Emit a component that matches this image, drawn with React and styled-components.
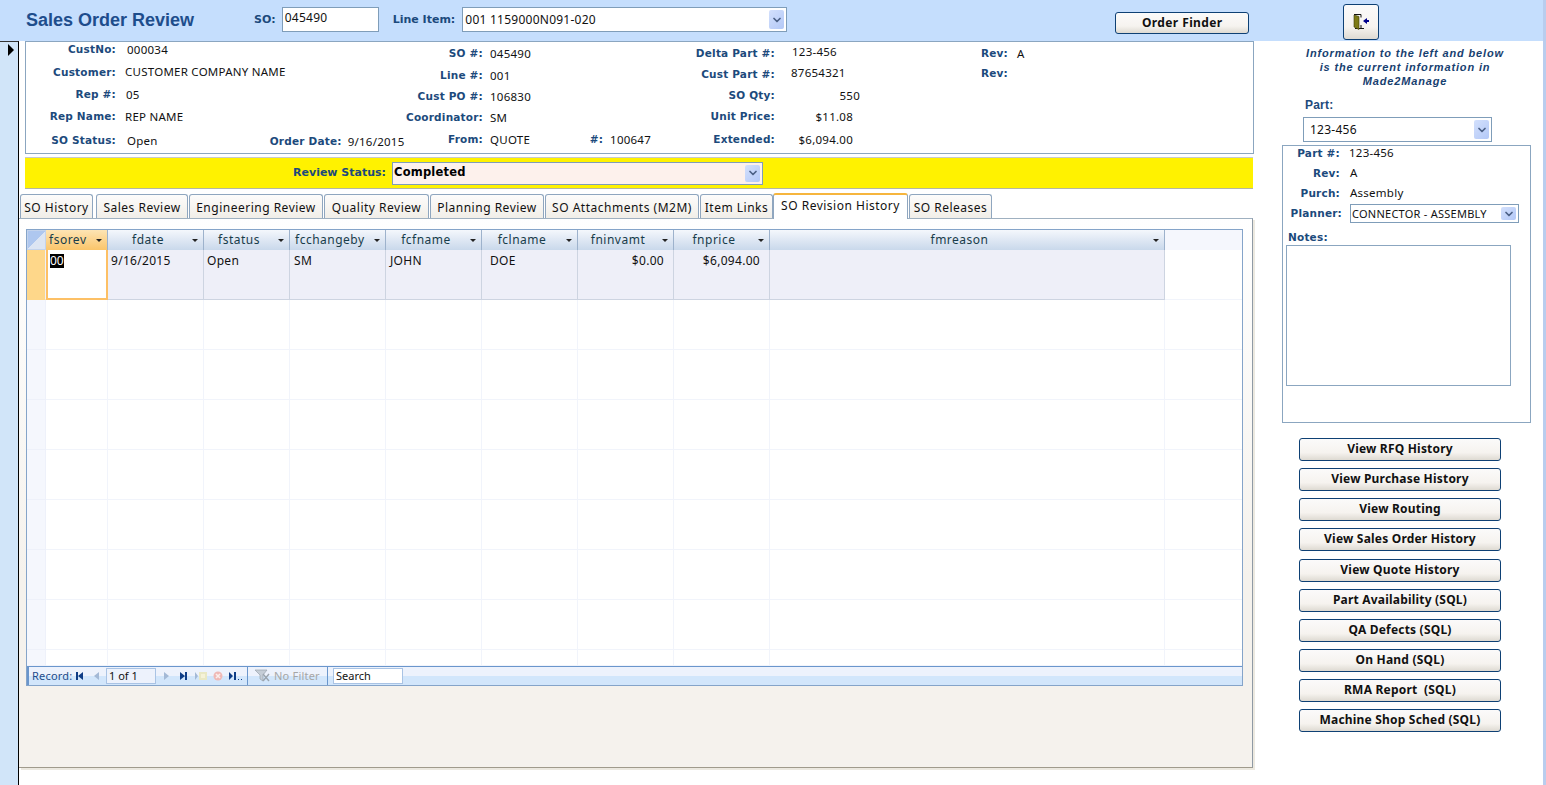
import React from 'react'
import styled, { createGlobalStyle, css } from 'styled-components'
import { ChevronDown } from 'lucide-react'

const Global = createGlobalStyle`
  html, body {
    margin: 0;
    padding: 0;
    background: #fff;
    overflow: hidden;
  }
  * { box-sizing: border-box; }
`

const labelFont = css`
  font-family: 'DejaVu Sans', Verdana, sans-serif;
  font-weight: bold;
  font-size: 10.5px;
  letter-spacing: 0.2px;
  color: #1c4a7c;
  white-space: nowrap;
`
const valueFont = css`
  font-family: 'Noto Sans', Tahoma, sans-serif;
  font-size: 11.5px;
  letter-spacing: 0.25px;
  color: #111;
  white-space: nowrap;
`

const Shell = styled.div`
  display: flex;
  width: 1546px;
  height: 785px;
  overflow: hidden;
`
const Page = styled.div`
  width: 1543px;
  display: flex;
  flex-direction: column;
`
const EdgeStrip = styled.div`
  width: 3px;
  background: #b9cdee;
`

// *---- top bar ----*
const Header = styled.header`
  height: 41px;
  flex: none;
  background: #c5defd;
  display: flex;
  align-items: flex-start;
`
const Title = styled.h1`
  margin: 9px 0 0 26px;
  width: 228px;
  font: bold 18px/22px 'Liberation Sans', Arial, sans-serif;
  color: #1e4d8c;
`
const HeadLabel = styled.span`
  ${labelFont}
  font-size: 11px;
  letter-spacing: 0;
  margin: 13px ${p => p.$gap}px 0 0;
`
const TextBox = styled.div`
  ${valueFont}
  font-size: 12px;
  margin: 7px 14px 0 0;
  width: ${p => p.$w}px;
  height: 25px;
  border: 1px solid #7f9db9;
  background: #fff;
  padding: 0 2px;
  line-height: 20px;
`
const ComboBox = styled.div`
  ${valueFont}
  display: flex;
  align-items: center;
  justify-content: space-between;
  width: ${p => p.$w}px;
  height: ${p => p.$h}px;
  border: 1px solid #7f9db9;
  background: ${p => p.$bg || '#fff'};
  padding: 2px 2px 2px 1px;
`
const ComboText = styled.span`
  padding-left: ${p => p.$pad || 0}px;
  font-size: ${p => p.$size || 12}px;
  ${p => p.$bold && css`
    font-family: 'DejaVu Sans', Verdana, sans-serif;
    font-weight: bold;
    font-size: 11.5px;
    color: #000;
    letter-spacing: 0.2px;
    padding-bottom: 2px;
  `}
`
const ArrowBtn = styled.span`
  flex: none;
  width: 15px;
  height: 100%;
  border-radius: 2px;
  background: linear-gradient(135deg, #d3e0fc, #b3c8f7);
  display: flex;
  align-items: center;
  justify-content: center;
  color: #4c6186;
`
const HeadCombo = styled(ComboBox)`
  margin-top: 7px;
`
const pushButton = css`
  border: 1px solid #0e4074;
  border-radius: 3px;
  background: linear-gradient(#fbfafa 0%, #f6f3ef 65%, #dedad2 100%);
  font-family: 'Noto Sans', Tahoma, sans-serif;
  font-weight: bold;
  font-size: 12px;
  color: #111;
  padding: 0 0 2px;
  white-space: pre;
`
const FinderBtn = styled.button`
  ${pushButton}
  width: 134px;
  height: 22px;
  margin: 12px 0 0 328px;
  letter-spacing: 0.4px;
`
const ExitBtn = styled.button`
  ${pushButton}
  width: 36px;
  height: 36px;
  margin: 4px 0 0 94px;
  padding: 0;
  display: flex;
  align-items: center;
  justify-content: center;
`

const Body = styled.div`
  flex: 1;
  display: flex;
  min-height: 0;
`
const RecordSelector = styled.div`
  width: 19px;
  flex: none;
  background: #d1e5f9;
  border-right: 1px solid #000;
  border-top: 1px solid #333;
  padding: 2px 0 0 8px;
`
const Pointer = styled.div`
  width: 0;
  height: 0;
  border-left: 6px solid #000;
  border-top: 6px solid transparent;
  border-bottom: 6px solid transparent;
`
const Main = styled.main`
  width: 1235px;
  flex: none;
  display: flex;
  flex-direction: column;
`

// *---- order detail block ----*
const Detail = styled.section`
  margin-left: 6px;
  height: 113px;
  border: 1px solid #8ba6c0;
  display: flex;
`
const Col = styled.div`
  width: ${p => p.$w}px;
  flex: none;
`
const Row = styled.div`
  display: flex;
  align-items: flex-start;
  height: 14px;
  margin-top: ${p => p.$mt || 0}px;
`
const Label = styled.span`
  ${labelFont}
  flex: none;
  width: ${p => p.$w}px;
  text-align: right;
  line-height: 14px;
  margin-top: ${p => p.$dy || 0}px;
`
const Value = styled.span`
  ${valueFont}
  flex: none;
  line-height: 14px;
  margin-left: ${p => p.$ml || 0}px;
  margin-top: ${p => (p.$dy === undefined ? 1 : p.$dy)}px;
  ${p => p.$w && css`
    width: ${p.$w}px;
    text-align: right;
  `}
`

const ReviewBar = styled.div`
  margin: 3px 0 0 6px;
  height: 32px;
  width: 1228px;
  background: #fff200;
  border-top: 1px solid #c6cacc;
  border-bottom: 1px solid #b5b7a0;
  display: flex;
  align-items: center;
`
const ReviewLabel = styled.span`
  ${labelFont}
  font-size: 11px;
  letter-spacing: 0;
  width: 361px;
  margin-right: 6px;
  padding-bottom: 2px;
  text-align: right;
`

// *---- tabs ----*
const TabRow = styled.div`
  margin: 4px 0 0 1px;
  height: 25px;
  flex: none;
  display: flex;
  align-items: flex-end;
  gap: 1px;
  position: relative;
  z-index: 1;
`
const Tab = styled.div`
  ${valueFont}
  font-size: 12px;
  letter-spacing: 0.5px;
  width: ${p => p.$w}px;
  height: 24px;
  line-height: 25px;
  text-align: center;
  border: 1px solid #8fa6bf;
  border-bottom: none;
  border-radius: 3px 3px 0 0;
  background: linear-gradient(#fdfcfb, #f1eee8);
  &:nth-child(2) { margin-left: 2px; }
  ${p => p.$active && css`
    height: 26px;
    line-height: 22px;
    margin: 0 0 -1px -1px;
    background: #fff;
    border-top: 2px solid #f6b53d;
    border-color: #f6b53d #8fa6bf #fff #8fa6bf;
  `}
`
const TabPage = styled.div`
  width: 1234px;
  height: 550px;
  flex: none;
  border-top: 1px solid #9fb0c0;
  border-right: 1px solid #8f9aa5;
  border-bottom: 1px solid #a09b8c;
  box-shadow: 2px 2px 0 #ece9e0;
  background: linear-gradient(#fff 0%, #f5f2ed 65%);
  padding: 10px 0 0 7px;
`

// *---- datasheet ----*
const gridCols = '19px 62px 96px 86px 96px 96px 96px 96px 96px 395px 77px'
const Sheet = styled.div`
  width: 1217px;
  height: 457px;
  border: 1px solid #85a4c9;
  background: #fff;
  display: flex;
  flex-direction: column;
`
const SheetRow = styled.div`
  display: grid;
  grid-template-columns: ${gridCols};
  flex: none;
  height: ${p => p.$h}px;
`
const Corner = styled.div`
  background: linear-gradient(135deg, #aec7ef 50%, #dce5f3 50%);
  border: 1px solid #c3d3ec;
`
const HeadCell = styled.div`
  font-family: 'Noto Sans', Tahoma, sans-serif;
  font-size: 12px;
  letter-spacing: 0.5px;
  color: #183c4a;
  display: flex;
  align-items: center;
  justify-content: ${p => (p.$pl ? 'flex-start' : 'center')};
  padding: 0 ${p => (p.$pl ? 10 : 18)}px 2px ${p => p.$pl || 3}px;
  position: relative;
  border-right: 1px solid #9db2cc;
  background: ${p => (p.$on
    ? 'linear-gradient(#fde4b4, #fbc56a)'
    : 'linear-gradient(#f4f7fc, #c9d8eb)')};
`
const SortMark = styled.i`
  position: absolute;
  right: 5px;
  top: 9px;
  width: 0;
  height: 0;
  border-left: 3px solid transparent;
  border-right: 3px solid transparent;
  border-top: 3px solid #222;
`
const HeadRest = styled.div`
  background: #f5f7fd;
`
const SheetBody = styled.div`
  flex: 1;
  min-height: 0;
  overflow: hidden;
`
const RowHead = styled.div`
  background: ${p => (p.$on ? '#fed78a' : '#f5f7fd')};
  border-right: 1px solid #eef1fa;
  border-bottom: 1px solid ${p => (p.$on ? '#fed78a' : '#eef1fa')};
`
const Cell = styled.div`
  ${valueFont}
  font-size: 12px;
  letter-spacing: 0.3px;
  padding: 3px ${p => (p.$right ? 9 : 4)}px 0 ${p => p.$pl || 3}px;
  line-height: 16px;
  text-align: ${p => (p.$right ? 'right' : 'left')};
  background: ${p => (p.$filled ? '#eeeff8' : '#fff')};
  border-right: 1px solid ${p => (p.$filled ? '#cdd4e1' : '#f1f4fb')};
  border-bottom: 1px solid ${p => (p.$filled ? '#cdd4e1' : '#f1f4fb')};
`
const ActiveCell = styled.div`
  ${valueFont}
  font-size: 12px;
  letter-spacing: 0;
  line-height: 14px;
  background: #fff;
  border: 2px solid #fdc065;
  border-top: none;
  padding: 4px 0 0 2px;
`
const Selected = styled.span`
  background: #000;
  color: #fff;
  display: inline-block;
`
const RowFill = styled.div`
  border-bottom: 1px solid #f1f4fb;
`

// *---- record navigation ----*
const NavBar = styled.div`
  height: 19px;
  flex: none;
  display: flex;
  align-items: center;
  border-top: 1px solid #6a96cc;
  border-left: 2px solid #6a96cc;
  background: linear-gradient(#edf2fc 50%, #d2e6fb 50%);
  font-family: 'Noto Sans', Tahoma, sans-serif;
  font-size: 11px;
`
const NavText = styled.span`
  color: ${p => p.$color};
  width: ${p => p.$w}px;
  margin-left: ${p => p.$ml || 0}px;
  padding-bottom: 2px;
  white-space: nowrap;
  letter-spacing: 0.2px;
`
const NavBtn = styled.span`
  width: ${p => p.$w || 17}px;
  height: 14px;
  padding-left: ${p => p.$pl || 0}px;
  flex: none;
  display: flex;
  align-items: center;
  justify-content: center;
`
const NavInput = styled.div`
  width: ${p => p.$w}px;
  height: 16px;
  flex: none;
  margin: 0 ${p => p.$mr || 0}px 0 ${p => p.$ml || 0}px;
  border: 1px solid #a9c3e4;
  background: ${p => p.$bg};
  color: #111;
  line-height: 13px;
  padding-left: 2px;
`
const NavDivider = styled.span`
  width: 1px;
  align-self: stretch;
  flex: none;
  background: #6a96cc;
  margin-left: ${p => p.$ml || 0}px;
`

// *---- right column ----*
const Side = styled.aside`
  flex: 1;
  display: flex;
  flex-direction: column;
`
const Notice = styled.p`
  margin: 5px 0 0 13px;
  text-align: center;
  font: italic bold 11px/14px 'Liberation Sans', Arial, sans-serif;
  letter-spacing: 0.85px;
  color: #17406f;
`
const PartLabel = styled.span`
  ${labelFont}
  font-size: 12px;
  font-family: 'Liberation Sans', Arial, sans-serif;
  line-height: 14px;
  margin: 10px 0 5px 51px;
`
const PartCombo = styled(ComboBox)`
  margin-left: 49px;
`
const PartBox = styled.div`
  margin: 3px 0 0 28px;
  width: 249px;
  height: 278px;
  border: 1px solid #8ba6c0;
`
const PlannerCombo = styled(ComboBox)`
  margin-left: 8px;
`
const NotesLabel = styled.div`
  ${labelFont}
  line-height: 14px;
  margin: 12px 0 1px 5px;
`
const NotesArea = styled.div`
  margin-left: 3px;
  width: 225px;
  height: 141px;
  border: 1px solid #8ba6c0;
`
const ButtonStack = styled.div`
  margin: 15px 0 0 45px;
  display: flex;
  flex-direction: column;
  gap: 7px;
`
const SideBtn = styled.button`
  ${pushButton}
  width: 202px;
  height: 23px;
  letter-spacing: 0.2px;
  &:nth-child(5) { margin-top: 1px; }
`

const Chevron = () => <ChevronDown size={12} strokeWidth={3.5} />

const DoorIcon = () => (
  <svg width="18" height="18" viewBox="0 0 18 18">
    <path d="M2 1.5h7M9 1.5v3M9 12v3.5M3 15.5h9" stroke="#111" fill="none" />
    <path d="M2 2l5 1.5v13L2 14z" fill="#7d7a16" stroke="#3b3a08" strokeWidth="0.6" />
    <path d="M11 8l4-3v2h2v2h-2v2z" fill="#00008c" />
  </svg>
)

const NavIcon = ({ kind, color = '#0f3d86' }) => {
  const shapes = {
    first: <path d="M1 1h2v8H1zM8 1v8L3 5z" fill={color} />,
    prev: <path d="M7 1v8L2 5z" fill={color} />,
    next: <path d="M3 1v8l5-4z" fill={color} />,
    last: <path d="M2 1v8l5-4zM7 1h2v8H7z" fill={color} />,
    add: (
      <>
        <path d="M0 1v8l3-4z" fill={color} />
        <rect x="4" y="1" width="8" height="8" fill="#e9e8c4" />
        <rect x="6" y="3" width="4" height="4" fill="#f5f2d8" />
      </>
    ),
    del: (
      <>
        <circle cx="6" cy="5" r="4.5" fill="#efb9b6" />
        <path d="M4 3l4 4M8 3l-4 4" stroke="#fbeeec" strokeWidth="1.6" />
      </>
    ),
    end: <path d="M0 1v8l4-4zM5 1h2v8H5zM9 8h1v1H9zM12 8h1v1h-1z" fill={color} />,
  }
  return <svg width="13" height="10" viewBox="0 0 13 10">{shapes[kind]}</svg>
}

const FilterIcon = () => (
  <svg width="18" height="14" viewBox="0 0 18 14">
    <path d="M1 1h12L9 6v6L6 10V6z" fill="#c5cdd6" stroke="#9aa4ad" strokeWidth="0.7" />
    <path d="M9 5l6 7M15 5l-6 7" stroke="#9aa4ad" strokeWidth="1.4" />
  </svg>
)

const tabs = [
  ['SO History', 73],
  ['Sales Review', 92],
  ['Engineering Review', 134],
  ['Quality Review', 105],
  ['Planning Review', 114],
  ['SO Attachments (M2M)', 154],
  ['Item Links', 73],
  ['SO Revision History', 135, true],
  ['SO Releases', 83],
]

const columns = [
  { name: 'fsorev', pl: 3 },
  { name: 'fdate' },
  { name: 'fstatus' },
  { name: 'fcchangeby', pl: 5 },
  { name: 'fcfname' },
  { name: 'fclname' },
  { name: 'fninvamt' },
  { name: 'fnprice' },
  { name: 'fmreason' },
]

const sideButtons = [
  'View RFQ History',
  'View Purchase History',
  'View Routing',
  'View Sales Order History',
  'View Quote History',
  'Part Availability (SQL)',
  'QA Defects (SQL)',
  'On Hand (SQL)',
  'RMA Report  (SQL)',
  'Machine Shop Sched (SQL)',
]

const EmptyRow = ({ h }) => (
  <SheetRow $h={h}>
    <RowHead />
    {columns.map(c => <Cell key={c.name} />)}
    <RowFill />
  </SheetRow>
)

const App = () => (
  <Shell>
    <Global />
    <Page>
      <Header>
        <Title>Sales Order Review</Title>
        <HeadLabel $gap={6}>SO:</HeadLabel>
        <TextBox $w={97}>045490</TextBox>
        <HeadLabel $gap={7}>Line Item:</HeadLabel>
        <HeadCombo $w={325} $h={25}>
          <ComboText $pad={1}>001 1159000N091-020</ComboText>
          <ArrowBtn><Chevron /></ArrowBtn>
        </HeadCombo>
        <FinderBtn>Order Finder</FinderBtn>
        <ExitBtn aria-label="Exit"><DoorIcon /></ExitBtn>
      </Header>

      <Body>
        <RecordSelector><Pointer /></RecordSelector>
        <Main>
          <Detail>
            <Col $w={370}>
              <Row><Label $w={90}>CustNo:</Label><Value $ml={11}>000034</Value></Row>
              <Row $mt={9}><Label $w={90}>Customer:</Label><Value $ml={9} $dy={0}>CUSTOMER COMPANY NAME</Value></Row>
              <Row $mt={8}><Label $w={90}>Rep #:</Label><Value $ml={10}>05</Value></Row>
              <Row $mt={8}><Label $w={90}>Rep Name:</Label><Value $ml={9}>REP NAME</Value></Row>
              <Row $mt={10}>
                <Label $w={90}>SO Status:</Label>
                <Value $ml={11}>Open</Value>
                <Label $w={184} $dy={1}>Order Date:</Label>
                <Value $ml={6} $dy={2}>9/16/2015</Value>
              </Row>
            </Col>
            <Col $w={264}>
              <Row $mt={4}><Label $w={87}>SO #:</Label><Value $ml={7}>045490</Value></Row>
              <Row $mt={8}><Label $w={87}>Line #:</Label><Value $ml={7}>001</Value></Row>
              <Row $mt={7}><Label $w={87}>Cust PO #:</Label><Value $ml={7}>106830</Value></Row>
              <Row $mt={7}><Label $w={87}>Coordinator:</Label><Value $ml={7}>SM</Value></Row>
              <Row $mt={8}>
                <Label $w={87}>From:</Label>
                <Value $ml={7}>QUOTE</Value>
                <Label $w={73}>#:</Label>
                <Value $ml={7}>100647</Value>
              </Row>
            </Col>
            <Col $w={240}>
              <Row $mt={4}><Label $w={115}>Delta Part #:</Label><Value $ml={17} $dy={-1}>123-456</Value></Row>
              <Row $mt={7}><Label $w={115}>Cust Part #:</Label><Value $ml={16} $dy={-1}>87654321</Value></Row>
              <Row $mt={7}><Label $w={115}>SO Qty:</Label><Value $w={85}>550</Value></Row>
              <Row $mt={7}><Label $w={115}>Unit Price:</Label><Value $w={78}>$11.08</Value></Row>
              <Row $mt={9}><Label $w={115}>Extended:</Label><Value $w={78}>$6,094.00</Value></Row>
            </Col>
            <Col $w={160}>
              <Row $mt={4}><Label $w={108}>Rev:</Label><Value $ml={9}>A</Value></Row>
              <Row $mt={6}><Label $w={108}>Rev:</Label></Row>
            </Col>
          </Detail>

          <ReviewBar>
            <ReviewLabel>Review Status:</ReviewLabel>
            <ComboBox $w={371} $h={23} $bg="#fdf1ec">
              <ComboText $bold>Completed</ComboText>
              <ArrowBtn><Chevron /></ArrowBtn>
            </ComboBox>
          </ReviewBar>

          <TabRow>
            {tabs.map(([name, w, active]) => (
              <Tab key={name} $w={w} $active={active}>{name}</Tab>
            ))}
          </TabRow>

          <TabPage>
            <Sheet>
              <SheetRow $h={20}>
                <Corner />
                {columns.map((c, i) => (
                  <HeadCell key={c.name} $on={i === 0} $pl={c.pl}>
                    {c.name}
                    <SortMark />
                  </HeadCell>
                ))}
                <HeadRest />
              </SheetRow>
              <SheetBody>
                <SheetRow $h={50}>
                  <RowHead $on />
                  <ActiveCell><Selected>00</Selected></ActiveCell>
                  <Cell $filled>9/16/2015</Cell>
                  <Cell $filled>Open</Cell>
                  <Cell $filled $pl={4}>SM</Cell>
                  <Cell $filled $pl={4}>JOHN</Cell>
                  <Cell $filled $pl={8}>DOE</Cell>
                  <Cell $filled $right>$0.00</Cell>
                  <Cell $filled $right>$6,094.00</Cell>
                  <Cell $filled />
                  <RowFill />
                </SheetRow>
                {[1, 2, 3, 4, 5, 6, 7].map(n => <EmptyRow key={n} h={50} />)}
                <EmptyRow h={16} />
              </SheetBody>
              <NavBar>
                <NavText $ml={3} $w={40} $color="#1e4d8c">Record:</NavText>
                <NavBtn $w={19}><NavIcon kind="first" /></NavBtn>
                <NavBtn $w={15}><NavIcon kind="prev" color="#a3b9d6" /></NavBtn>
                <NavInput $w={50} $mr={3} $bg="#edf2fc">1 of 1</NavInput>
                <NavBtn><NavIcon kind="next" color="#a3b9d6" /></NavBtn>
                <NavBtn><NavIcon kind="last" /></NavBtn>
                <NavBtn><NavIcon kind="add" color="#a3b9d6" /></NavBtn>
                <NavBtn><NavIcon kind="del" /></NavBtn>
                <NavBtn><NavIcon kind="end" /></NavBtn>
                <NavDivider $ml={3} />
                <NavBtn $w={26} $pl={4}><FilterIcon /></NavBtn>
                <NavText $w={53} $color="#a6a6a6">No Filter</NavText>
                <NavDivider />
                <NavInput $w={70} $ml={5} $bg="#fff">Search</NavInput>
              </NavBar>
            </Sheet>
          </TabPage>
        </Main>

        <Side>
          <Notice>
            Information to the left and below<br />
            is the current information in<br />
            Made2Manage
          </Notice>
          <PartLabel>Part:</PartLabel>
          <PartCombo $w={189} $h={25}>
            <ComboText $pad={5}>123-456</ComboText>
            <ArrowBtn><Chevron /></ArrowBtn>
          </PartCombo>
          <PartBox>
            <Row><Label $w={57}>Part #:</Label><Value $ml={9} $dy={0}>123-456</Value></Row>
            <Row $mt={6}><Label $w={57}>Rev:</Label><Value $ml={10} $dy={0}>A</Value></Row>
            <Row $mt={6}><Label $w={57}>Purch:</Label><Value $ml={10} $dy={0}>Assembly</Value></Row>
            <Row $mt={4}>
              <Label $w={59} $dy={2}>Planner:</Label>
              <PlannerCombo $w={169} $h={19}>
                <ComboText $size={11}>CONNECTOR - ASSEMBLY</ComboText>
                <ArrowBtn><Chevron /></ArrowBtn>
              </PlannerCombo>
            </Row>
            <NotesLabel>Notes:</NotesLabel>
            <NotesArea />
          </PartBox>
          <ButtonStack>
            {sideButtons.map(b => <SideBtn key={b}>{b}</SideBtn>)}
          </ButtonStack>
        </Side>
      </Body>
    </Page>
    <EdgeStrip />
  </Shell>
)

export default App
